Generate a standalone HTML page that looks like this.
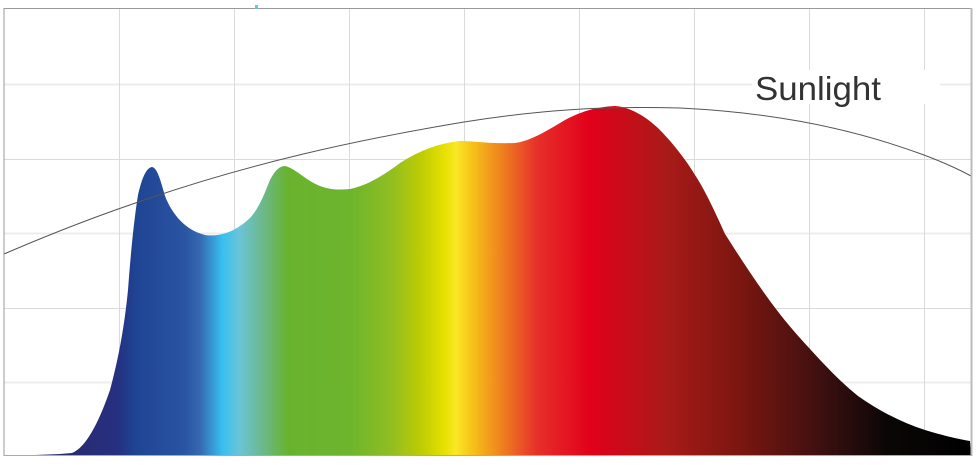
<!DOCTYPE html>
<html><head><meta charset="utf-8"><style>
html,body{margin:0;padding:0;background:#fff;width:976px;height:465px;overflow:hidden}
svg{display:block}
</style></head><body>
<svg width="976" height="465" viewBox="0 0 976 465" xmlns="http://www.w3.org/2000/svg">
<defs>
<linearGradient id="g" x1="0" y1="0" x2="976" y2="0" gradientUnits="userSpaceOnUse">
<stop offset="0.07" stop-color="#2a2a70"/>
<stop offset="0.12" stop-color="#263080"/>
<stop offset="0.14" stop-color="#1f4494"/>
<stop offset="0.19" stop-color="#2a55a2"/>
<stop offset="0.205" stop-color="#3668b0"/>
<stop offset="0.228" stop-color="#38c0f0"/>
<stop offset="0.245" stop-color="#6ac4d8"/>
<stop offset="0.27" stop-color="#6cb88a"/>
<stop offset="0.295" stop-color="#68b32e"/>
<stop offset="0.36" stop-color="#6eb52c"/>
<stop offset="0.4" stop-color="#90bd22"/>
<stop offset="0.43" stop-color="#bccb04"/>
<stop offset="0.455" stop-color="#e6e000"/>
<stop offset="0.467" stop-color="#f9e724"/>
<stop offset="0.485" stop-color="#f6c018"/>
<stop offset="0.51" stop-color="#ef8a1e"/>
<stop offset="0.55" stop-color="#e6302a"/>
<stop offset="0.605" stop-color="#e2001a"/>
<stop offset="0.68" stop-color="#aa1a18"/>
<stop offset="0.76" stop-color="#7a1610"/>
<stop offset="0.84" stop-color="#3e1010"/>
<stop offset="0.91" stop-color="#0a0606"/>
<stop offset="1" stop-color="#000"/>
</linearGradient>
</defs>
<g stroke="#dadada" stroke-width="1">
<line x1="4" y1="84.5" x2="971" y2="84.5" stroke="#ececec" stroke-width="2"/>
<line x1="4" y1="159.5" x2="971" y2="159.5"/>
<line x1="4" y1="233.5" x2="971" y2="233.5" stroke="#ececec" stroke-width="2"/>
<line x1="4" y1="308.5" x2="971" y2="308.5"/>
<line x1="4" y1="382.5" x2="971" y2="382.5" stroke="#ececec" stroke-width="2"/>
<line x1="119.5" y1="9" x2="119.5" y2="455"/>
<line x1="234.5" y1="9" x2="234.5" y2="455"/>
<line x1="349.5" y1="9" x2="349.5" y2="455"/>
<line x1="464.5" y1="9" x2="464.5" y2="455"/>
<line x1="579.5" y1="9" x2="579.5" y2="455"/>
<line x1="694.5" y1="9" x2="694.5" y2="455"/>
<line x1="809.5" y1="9" x2="809.5" y2="455"/>
<line x1="924.5" y1="9" x2="924.5" y2="455"/>
</g>
<path fill="url(#g)" d="M35,455 L60,454 L72,453 C85,448 98,425 110,390 C118,360 124,330 128,290 C131,250 134,220 138,195 C142,178 146,168 152,167 C157,168 160,178 165,196 C172,214 185,230 205,235 C220,237 235,232 250,218 C260,207 265,192 270,180 C275,170 280,166 285,166 C295,168 305,180 320,186 C330,190 340,190 350,189 C365,186 380,178 400,163 C420,150 440,143 460,141 C475,141 490,144 515,143 C530,141 545,132 565,120 C580,112 595,107 615,106 C630,107 645,116 658,128 C670,140 685,158 695,175 C705,190 715,212 725,234 C745,265 770,305 800,338 C820,360 838,380 858,396 C878,410 900,422 925,430 C945,436 958,439 970,441 L971,455 Z"/>
<path d="M4,254 C60,230 100,215 150,198 C250,164 350,141 464,122 C540,110 600,106 680,108 C760,112 840,124 924,155 C945,163 960,170 971,176" fill="none" stroke="#555" stroke-width="1"/>
<rect x="4" y="8.5" width="967" height="447" fill="none" stroke="#999" stroke-width="1"/>
<line x1="971.5" y1="8" x2="971.5" y2="456" stroke="#bbb" stroke-width="2"/>
<line x1="4" y1="455.5" x2="972" y2="455.5" stroke="#aaa" stroke-width="1"/>
<rect x="752" y="70" width="188" height="34" fill="#fff"/>
<text x="755" y="100" font-family="Liberation Sans, sans-serif" font-size="33" fill="#333" textLength="126" lengthAdjust="spacingAndGlyphs">Sunlight</text>
<rect x="255" y="5" width="3" height="4" fill="#6cc"/>
</svg>
</body></html>
